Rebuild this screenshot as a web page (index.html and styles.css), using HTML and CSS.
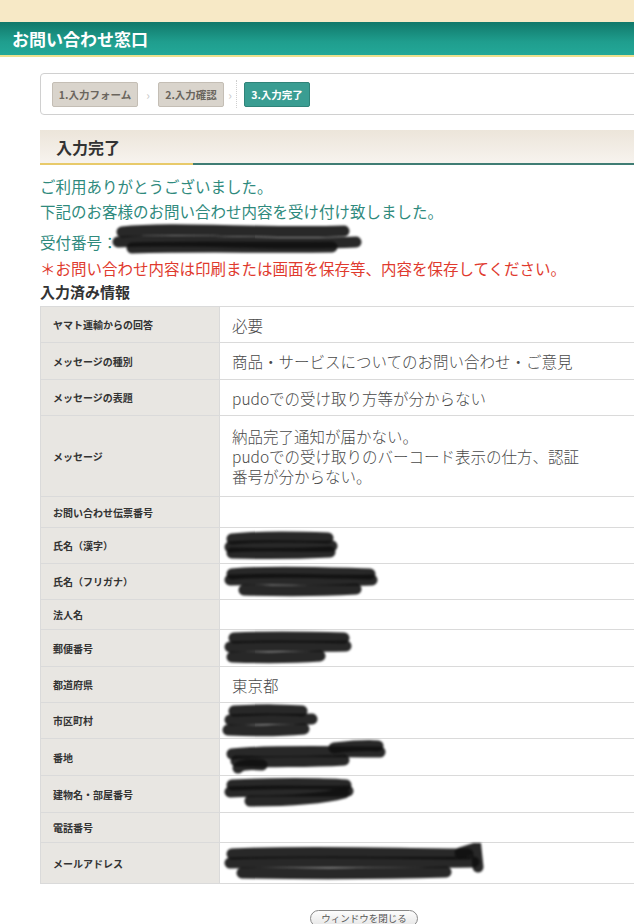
FILE: index.html
```html
<!DOCTYPE html>
<html lang="ja">
<head>
<meta charset="utf-8">
<title>お問い合わせ窓口</title>
<link rel="stylesheet" href="styles.css">
</head>
<body>
<div class="topband"></div>
<header class="hdr"><h1>お問い合わせ窓口</h1></header>
<main class="wrap">
  <div class="steps">
    <span class="step">1.入力フォーム</span>
    <span class="arrow">&#8250;</span>
    <span class="step">2.入力確認</span>
    <span class="arrow">&#8250;</span>
    <span class="sep"></span>
    <span class="step cur">3.入力完了</span>
  </div>
  <h2 class="sec">入力完了</h2>
  <p class="msg">ご利用ありがとうございました。</p>
  <p class="msg">下記のお客様のお問い合わせ内容を受け付け致しました。</p>
  <p class="msg num">受付番号：<svg class="scr" width="250" height="34" viewBox="0 0 250 34"><path d="M10 10 C60 4 150 12 232 9" /><path d="M6 20 C80 16 160 24 244 20" /><path d="M20 26 C90 24 150 26 220 25" /></svg></p>
  <p class="warn">＊お問い合わせ内容は印刷または画面を保存等、内容を保存してください。</p>
  <h3 class="sub">入力済み情報</h3>
  <table class="info">
    <tr class="h36"><th>ヤマト運輸からの回答</th><td>必要</td></tr>
    <tr class="h37"><th>メッセージの種別</th><td>商品・サービスについてのお問い合わせ・ご意見</td></tr>
    <tr class="h36"><th>メッセージの表題</th><td>pudoでの受け取り方等が分からない</td></tr>
    <tr class="h81"><th>メッセージ</th><td class="multi"><div class="mtext">納品完了通知が届かない。<br>pudoでの受け取りのバーコード表示の仕方、認証番号が分からない。</div></td></tr>
    <tr class="h31"><th>お問い合わせ伝票番号</th><td></td></tr>
    <tr class="h36"><th>氏名（漢字）</th><td><svg class="scr" width="118" height="30" viewBox="0 0 118 30"><path d="M10 8 C40 5 80 6 106 7" /><path d="M8 16 C40 13 80 16 110 15" /><path d="M10 22 C40 23 70 23 108 21" /></svg></td></tr>
    <tr class="h36"><th>氏名（フリガナ）</th><td><svg class="scr" width="158" height="34" viewBox="0 0 158 34"><path d="M10 9 C50 5 110 8 148 9" /><path d="M8 15 C60 13 110 16 150 15" /><path d="M22 25 C60 26 100 26 134 24" /></svg></td></tr>
    <tr class="h30"><th>法人名</th><td></td></tr>
    <tr class="h37"><th>郵便番号</th><td><svg class="scr" width="132" height="34" viewBox="0 0 132 34"><path d="M12 7 C50 5 90 6 122 7" /><path d="M8 16 C50 14 90 16 124 15" /><path d="M10 26 C40 27 70 27 98 25" /></svg></td></tr>
    <tr class="h36"><th>都道府県</th><td>東京都</td></tr>
    <tr class="h36"><th>市区町村</th><td><svg class="scr" width="100" height="34" viewBox="0 0 100 34"><path d="M12 7 C40 5 70 6 80 7" /><path d="M8 16 C40 14 70 16 90 15" /><path d="M6 26 C30 27 60 27 82 25" /></svg></td></tr>
    <tr class="h37"><th>番地</th><td><svg class="scr" width="168" height="36" viewBox="0 0 168 36"><path d="M10 15 C50 11 110 13 158 13" /><path d="M112 9 C130 7 148 6 156 7" /><path d="M14 22 C40 23 90 23 122 21" /><path d="M16 29 C20 25 30 25 40 26" /></svg></td></tr>
    <tr class="h37"><th>建物名・部屋番号</th><td><svg class="scr" width="134" height="32" viewBox="0 0 134 32"><path d="M10 7 C50 5 100 5 124 7" /><path d="M8 14 C50 12 100 14 126 13" /><path d="M28 23 C60 23 100 21 122 15" /></svg></td></tr>
    <tr class="h30"><th>電話番号</th><td></td></tr>
    <tr class="h40"><th>メールアドレス</th><td><svg class="scr" width="264" height="40" viewBox="0 0 264 40"><path d="M10 11 C90 7 180 11 246 11" /><path d="M8 20 C90 18 180 20 252 19" /><path d="M20 30 C90 31 160 31 224 29" /><path d="M238 10 L254 5 L256 24" /></svg></td></tr>
  </table>
  <div class="btnrow"><button class="close" type="button">ウィンドウを閉じる</button></div>
</main>
</body>
</html>
```
FILE: styles.css
```css
html, body {
  margin: 0;
  padding: 0;
  overflow-x: hidden;
  background: #fff;
}
body {
  width: 634px;
  font-family: "Noto Sans CJK JP", "Noto Sans", sans-serif;
  color: #333;
}
.topband {
  height: 22px;
  background: #f7e9c6;
}
.hdr {
  height: 33px;
  background: linear-gradient(#11786a, #1f9e8e 60%, #23a898);
  border-bottom: 2px solid #ece08e;
  display: flex;
  align-items: center;
  padding-left: 12px;
}
.hdr h1 {
  margin: 0;
  color: #fff;
  font-size: 17px;
  font-weight: 700;
  line-height: 1;
}
.wrap {
  margin-left: 40px;
  width: 648px;
  padding-top: 16px;
}
.steps {
  height: 42px;
  box-sizing: border-box;
  border: 1px solid #d0d0d0;
  border-radius: 4px;
  display: flex;
  align-items: center;
  padding-left: 11px;
}
.step {
  height: 25px;
  box-sizing: border-box;
  display: flex;
  align-items: center;
  justify-content: center;
  padding: 0;
  background: #d9d4cc;
  border: 1px solid #c4beb5;
  border-radius: 2px;
  font-size: 10.5px;
  font-weight: 700;
  color: #6a655d;
}
.step:nth-child(1) { width: 86px; }
.step:nth-child(3) { width: 66px; }
.step.cur {
  width: 66px;
  background: #3a9d92;
  border-color: #2f8379;
  color: #fff;
}
.arrow {
  width: 20px;
  text-align: center;
  color: #c8c8c8;
  font-size: 12px;
}
.arrow:nth-of-type(4) { width: 12px; }
.sep {
  width: 0;
  height: 28px;
  border-left: 1px dotted #cfcfcf;
  margin-right: 7px;
}
.sec {
  margin: 15px 0 0;
  height: 33px;
  background: linear-gradient(#ece5da, #f7f3ee);
  border-bottom: 2px solid #3f7d74;
  position: relative;
  display: flex;
  align-items: center;
  padding-left: 16px;
  font-size: 16px;
  font-weight: 700;
  color: #333;
}
.sec::after {
  content: "";
  position: absolute;
  left: 0;
  bottom: -2px;
  width: 153px;
  height: 2px;
  background: #e8ca6a;
}
.msg {
  margin: 0;
  color: #2f8a7d;
  font-size: 15.5px;
  line-height: 25px;
}
.msg:first-of-type { margin-top: 9px; }
.msg.num {
  margin-top: 6px;
  display: flex;
  align-items: center;
  height: 25px;
}
.msg.num .scr { margin-left: -6px; margin-top: -8px; }
.warn {
  margin: 0;
  color: #e03a2e;
  font-size: 15.5px;
  line-height: 26px;
}
.sub {
  margin: 0;
  font-size: 15px;
  font-weight: 700;
  line-height: 21px;
  color: #333;
}
.info {
  margin-top: 4px;
  width: 648px;
  border-collapse: collapse;
  border: 1px solid #dadada;
}
.info th, .info td {
  border-bottom: 1px solid #dadada;
  padding: 0;
  vertical-align: middle;
}
.info th {
  width: 166px;
  padding-left: 12px;
  background: #e8e6e2;
  text-align: left;
  font-size: 10px;
  font-weight: 700;
  color: #333;
  border-right: 1px solid #dadada;
}
.info td {
  padding-left: 12px;
  font-size: 15.5px;
  font-weight: 300;
  color: #4a4a4a;
  line-height: 20px;
}
.info td .scr { display: block; margin-left: -10px; }
.mtext { width: 355px; }
.h30 { height: 30px; }
.h31 { height: 31px; }
.h36 { height: 36px; }
.h37 { height: 37px; }
.h40 { height: 40px; }
.h81 { height: 81px; }
.scr path {
  fill: none;
  stroke: #111;
  stroke-width: 11;
  stroke-linecap: round;
  opacity: 0.9;
}
.scr { filter: blur(0.8px); }
.btnrow {
  display: flex;
  justify-content: center;
  padding-top: 26px;
}
.close {
  font-family: "Noto Sans CJK JP", sans-serif;
  font-size: 9.5px;
  color: #555;
  background: linear-gradient(#fdfdfd, #e6e6e6);
  border: 1px solid #888;
  border-radius: 9px;
  height: 17px;
  padding: 0 10px;
  line-height: 15px;
}
```
